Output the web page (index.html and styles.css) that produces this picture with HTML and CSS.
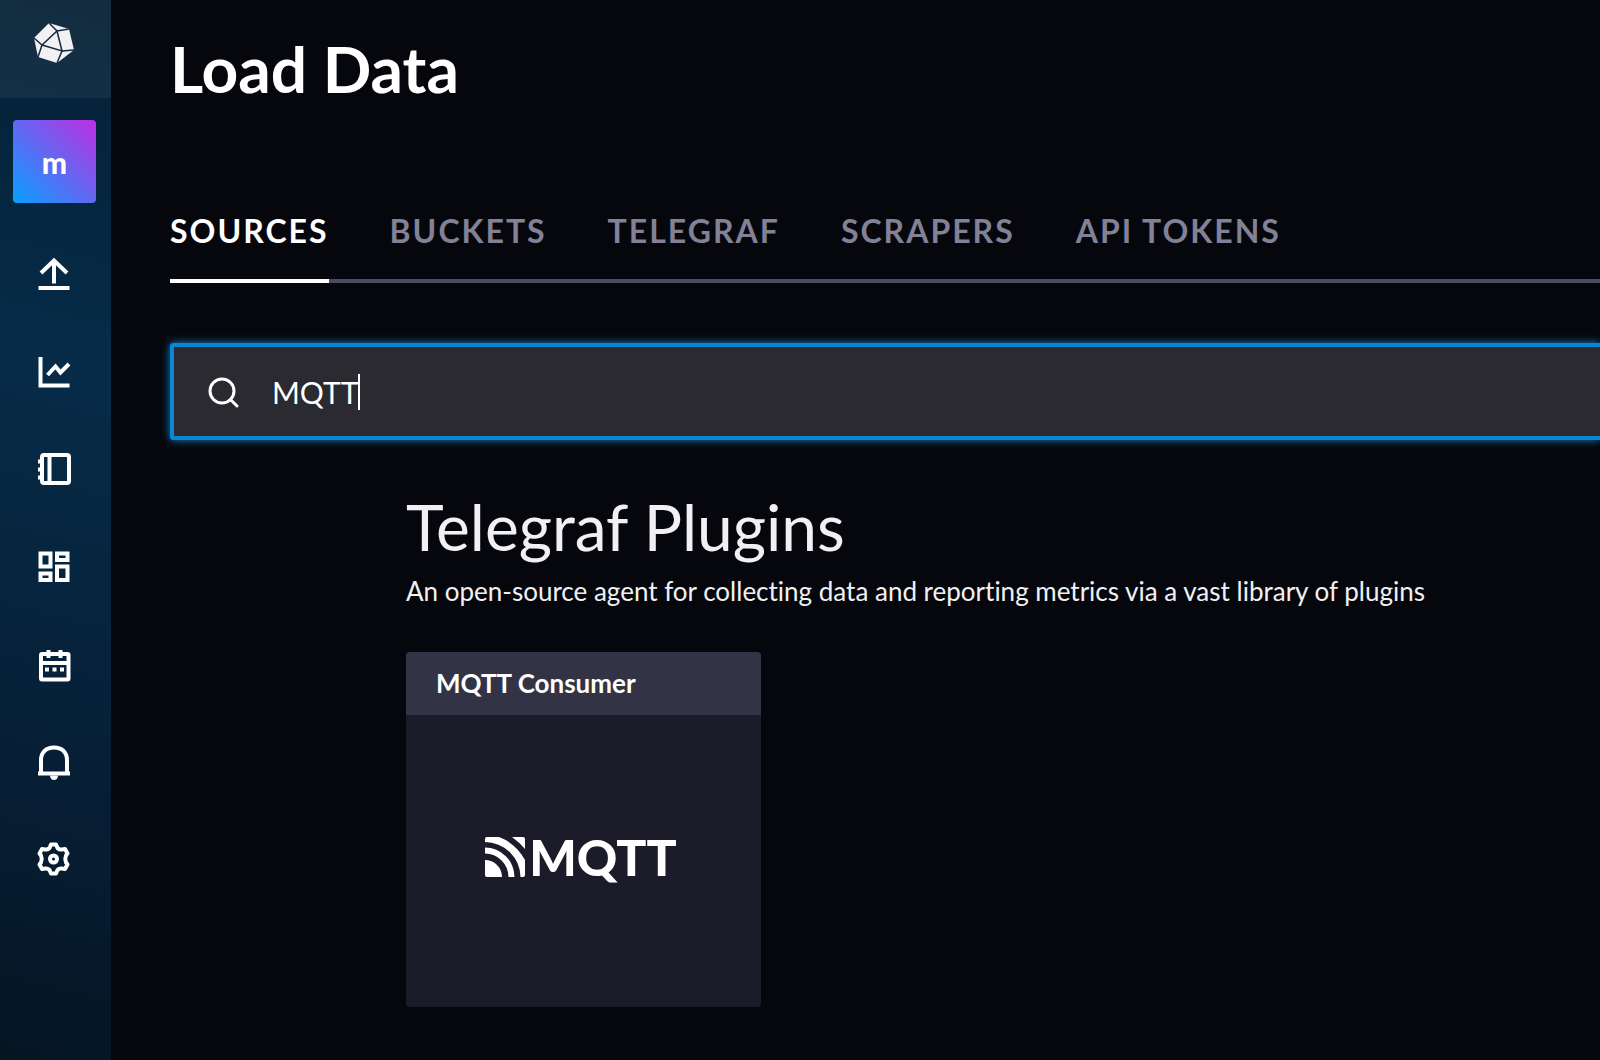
FILE: index.html
```
<!DOCTYPE html>
<html lang="en">
<head>
    <meta charset="UTF-8">
    <meta name="viewport" content="width=device-width, initial-scale=1.0">
    <title>Load Data</title>
    <link rel="stylesheet" href="styles.css">
</head>
<body>
    <aside class="sidebar">
        <a class="logo" href="#" aria-label="Home">
            <svg width="42" height="42" viewBox="0 0 42 42">
                <path class="logo-shape" d="M16 1L36 7L41 28L24 41L5 35L1 16Z"/>
                <path class="logo-lines" d="M16 1L24 9L36 7M1 16L9 23L24 9L29 29L9 23L5 35M41 28L29 29L24 41"/>
            </svg>
        </a>
        <a class="avatar" href="#">m</a>
        <nav class="nav">
            <a href="#" aria-label="Load Data">
                <svg width="34" height="34" viewBox="0 0 34 34">
                    <path d="M1.5 31H32.5M17 26.5V3.5M4 16L17 3.5L30 16"/>
                </svg>
            </a>
            <a href="#" aria-label="Data Explorer">
                <svg width="34" height="34" viewBox="0 0 34 34">
                    <path d="M3.5 3V31.5H32.5M10.5 21L18.5 12.5L23.5 18.5L32 10"/>
                </svg>
            </a>
            <a href="#" aria-label="Notebooks">
                <svg width="34" height="34" viewBox="0 0 34 34">
                    <rect x="5" y="3" width="27" height="28" rx="2"/>
                    <path d="M12.5 3V31M1 9.5H5M1 17.5H5M1 25.5H5"/>
                </svg>
            </a>
            <a href="#" aria-label="Dashboards">
                <svg width="34" height="34" viewBox="0 0 34 34">
                    <path d="M3.5 4.5H13.5V17.5H3.5ZM20 4.5H30.5V11H20ZM3.5 24.5H13.5V31H3.5ZM20 17.5H30.5V31H20Z"/>
                </svg>
            </a>
            <a href="#" aria-label="Tasks">
                <svg width="34" height="34" viewBox="0 0 34 34">
                    <rect x="4" y="7" width="27.5" height="25.5" rx="1"/>
                    <path d="M4 16H31.5M11.5 3V11M23.5 3V11M8 22.5H12M15.5 22.5H19.5M23 22.5H27"/>
                </svg>
            </a>
            <a href="#" aria-label="Alerts">
                <svg width="34" height="34" viewBox="0 0 34 34">
                    <path d="M1 28.5H33M4 28.5V15C4 7 9.5 2.5 17 2.5S30 7 30 15V28.5"/>
                    <path class="solid" d="M13 30.5H21C21 36.5 13 36.5 13 30.5Z"/>
                </svg>
            </a>
            <a href="#" aria-label="Settings">
                <svg width="34" height="34" viewBox="0 0 34 34">
                    <path stroke-linejoin="round" d="M14 2.5H19L20.5 6Q22.5 8 25 7.5L28 7L30.5 11.5L29 13.5Q27.5 17 29 20.5L30.5 22.5L28 27L25 26.5Q22.5 26 20.5 28L19 31.5H14L12.5 28Q10.5 26 8 26.5L5 27L2.5 22.5L4 20.5Q5.5 17 4 13.5L2.5 11.5L5 7L8 7.5Q10.5 8 12.5 6Z"/>
                    <circle cx="16.5" cy="17" r="3.5"/>
                </svg>
            </a>
        </nav>
    </aside>

    <main class="page">
        <h1>Load Data</h1>
        <div class="tabs">
            <button class="tab active">Sources</button>
            <button class="tab">Buckets</button>
            <button class="tab">Telegraf</button>
            <button class="tab">Scrapers</button>
            <button class="tab">API Tokens</button>
        </div>

        <label class="search">
            <svg width="34" height="34" viewBox="0 0 34 34">
                <circle cx="14" cy="16" r="12"/>
                <path d="M22.5 24.5L29 31"/>
            </svg>
            <input class="search-input" type="text" value="MQTT" aria-label="Search sources">
            <span class="caret"></span>
        </label>

        <section class="plugins">
            <h2>Telegraf Plugins</h2>
            <p class="description">An open-source agent for collecting data and reporting metrics via a vast library of plugins</p>
            <a class="card" href="#">
                <h3>MQTT Consumer</h3>
                <div class="card-body">
                    <svg width="40" height="40" viewBox="0 0 40 40">
                        <path d="M0 23A17 17 0 0 1 17 40H2Q0 40 0 38Z"/>
                        <path d="M0 10.5A29.5 29.5 0 0 1 29.5 40H23.5A23.5 23.5 0 0 0 0 16.5Z"/>
                        <path d="M0 2Q0 0 2 0H14C25 4 34 12 40 23V38Q40 40 38 40H35.5A35.5 35.5 0 0 0 0 5Z"/>
                        <path d="M27 0H38Q40 0 40 2V12Q34 5 27 0Z"/>
                    </svg>
                    <span class="brand">MQTT</span>
                </div>
            </a>
        </section>
    </main>
</body>
</html>
```
FILE: styles.css
```
* {
    margin: 0;
    padding: 0;
    box-sizing: border-box;
    font-family: Lato, sans-serif;
}

body {
    min-height: 100vh;
    display: flex;
    background: #06070d;
    color: #ffffff;
    font-variant-ligatures: none;
}

a {
    color: inherit;
    text-decoration: none;
}

/* Sidebar */
.sidebar {
    width: 111px;
    flex-shrink: 0;
    display: flex;
    flex-direction: column;
    align-items: center;
    background: linear-gradient(194deg, #051f34 0%, #062c49 34%, #061c31 80%, #051522 100%);
}

.logo {
    width: 100%;
    height: 98px;
    padding: 0 3px 12px 0;
    display: flex;
    justify-content: center;
    align-items: center;
    background: rgba(255, 255, 255, 0.06);
}

.logo-shape {
    fill: #f1f1f3;
}

.logo-lines {
    fill: none;
    stroke: #132a3d;
    stroke-width: 1.5;
}

.avatar {
    width: 83px;
    height: 83px;
    margin: 22px 2px 22px 0;
    display: flex;
    justify-content: center;
    align-items: center;
    border-radius: 4px;
    background: linear-gradient(45deg, #07a0ff, #be2ee4);
    font-size: 30px;
    font-weight: 900;
}

.nav {
    width: 100%;
    height: 683px;
    padding-right: 3px;
    display: grid;
    grid-auto-rows: 1fr;
}

.nav a {
    display: grid;
    place-items: center;
}

.nav svg,
.search svg {
    fill: none;
    stroke: #ffffff;
    stroke-width: 4;
    overflow: visible;
}

.nav .solid {
    fill: #ffffff;
    stroke: none;
}

/* Page */
.page {
    flex: 1;
    min-width: 0;
    padding: 33px 0 48px 59px;
}

h1 {
    font-size: 64px;
    line-height: 72px;
    margin-bottom: 108px;
}

.tabs {
    display: flex;
    gap: 61px;
    box-shadow: inset 0 -4px #4d4c5e;
}

.tab {
    padding-bottom: 30px;
    border: none;
    border-bottom: 4px solid transparent;
    background: none;
    color: #828196;
    font-size: 32px;
    font-weight: 700;
    line-height: 36px;
    letter-spacing: 2px;
    text-transform: uppercase;
    cursor: pointer;
}

.tab.active {
    color: #ffffff;
    border-color: #ffffff;
}

.search {
    height: 97px;
    margin: 60px 0 49px;
    padding-left: 34px;
    display: flex;
    align-items: center;
    border: 4px solid #0b86d1;
    border-right: none;
    border-radius: 4px 0 0 4px;
    background: #2b2a30;
    box-shadow: 0 0 8px #0b86d1;
    cursor: text;
}

.search svg {
    stroke-linecap: round;
    stroke-width: 3;
}

.search-input {
    field-sizing: content;
    margin-left: 30px;
    border: none;
    outline: none;
    background: none;
    color: #ffffff;
    font-size: 30px;
    line-height: 36px;
}

.caret {
    width: 2px;
    height: 36px;
    background: #ffffff;
}

.search-input:focus + .caret {
    visibility: hidden;
}

/* Plugin list */
.plugins {
    padding-left: 236px;
}

h2 {
    color: #f1f1f3;
    font-size: 64px;
    font-weight: 400;
    line-height: 76px;
    margin-bottom: 10px;
}

.description {
    color: #f1f1f3;
    font-size: 26px;
    line-height: 32px;
    margin-bottom: 45px;
}

.card {
    width: 355px;
    display: block;
    border-radius: 4px;
    overflow: hidden;
    background: #1c1b29;
}

h3 {
    padding: 15px 30px 16px;
    background: #333346;
    font-size: 26px;
    line-height: 32px;
}

.card-body {
    height: 292px;
    padding: 0 5px 8px 0;
    display: flex;
    justify-content: center;
    align-items: center;
    gap: 4px;
}

.card-body svg {
    fill: #ffffff;
}

.brand {
    font-size: 50px;
    font-weight: 900;
    line-height: 60px;
}
```
